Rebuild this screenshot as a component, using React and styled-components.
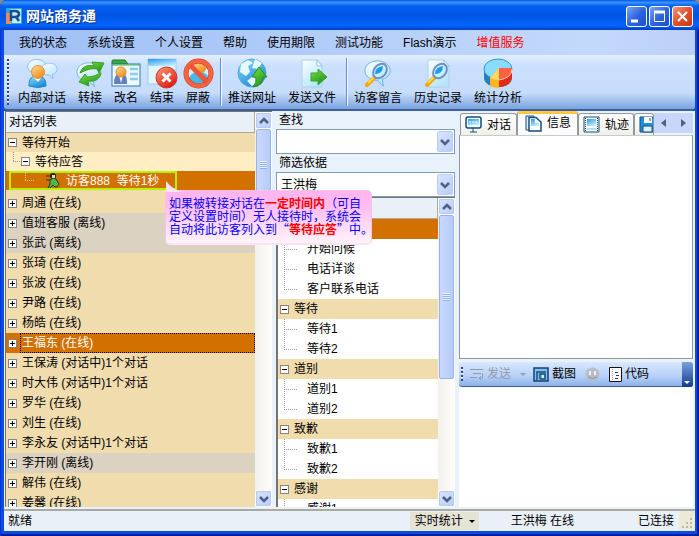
import React from "react";
import styled, { createGlobalStyle, css } from "styled-components";

const MENU = ["我的状态", "系统设置", "个人设置", "帮助", "使用期限", "测试功能", "Flash演示", "增值服务"];

const TOOLS = [
  [
    { label: "内部对话", icon: "chat", width: 60 },
    { label: "转接", icon: "transfer", width: 36 },
    { label: "改名", icon: "rename", width: 36 },
    { label: "结束", icon: "end", width: 36 },
    { label: "屏蔽", icon: "block", width: 36 },
  ],
  [
    { label: "推送网址", icon: "globe", width: 60 },
    { label: "发送文件", icon: "file", width: 60 },
  ],
  [
    { label: "访客留言", icon: "message", width: 60 },
    { label: "历史记录", icon: "history", width: 60 },
    { label: "统计分析", icon: "stats", width: 60 },
  ],
];

const STAFF = [
  { name: "周通", state: "(在线)" },
  { name: "值班客服", state: "(离线)", tone: "offline" },
  { name: "张武", state: "(离线)", tone: "offline" },
  { name: "张琦", state: "(在线)" },
  { name: "张波", state: "(在线)" },
  { name: "尹路", state: "(在线)" },
  { name: "杨皓", state: "(在线)" },
  { name: "王福东", state: "(在线)", tone: "active" },
  { name: "王保涛", state: "(对话中)1个对话" },
  { name: "时大伟", state: "(对话中)1个对话" },
  { name: "罗华", state: "(在线)" },
  { name: "刘生", state: "(在线)" },
  { name: "李永友", state: "(对话中)1个对话" },
  { name: "李开刚", state: "(离线)", tone: "offline" },
  { name: "解伟", state: "(在线)" },
  { name: "姜馨", state: "(在线)" },
];

const PHRASES = [
  { title: "等待", items: ["等待1", "等待2"] },
  { title: "道别", items: ["道别1", "道别2"] },
  { title: "致歉", items: ["致歉1", "致歉2"] },
  { title: "感谢", items: ["感谢1"] },
];

const Bubble = ({ x = 0, y = 0, s = 1 }) => (
  <path
    transform={`translate(${x} ${y}) scale(${s})`}
    d="M14 2C6.500 2 1 6.500 1 12c0 6 6 10 13 10l6 6-1-7c5-1.500 8-5 8-9C27 6.500 21.500 2 14 2Z"
    fill="url(#bubble)"
    stroke="#6fb0dd"
  />
);

const Magnifier = () => (
  <g>
    <path d="M11 20 4 27" stroke="#f5a800" strokeWidth="4" strokeLinecap="round" />
    <path d="M11 19 5 25" stroke="#ffe25a" strokeWidth="1.5" />
    <ellipse cx="17" cy="13" rx="6" ry="8" fill="#c9efff" stroke="#6f92c0" strokeWidth="2" transform="rotate(40 17 13)" />
    <path d="M12 16q0-7 8-8 0 8-8 8" fill="#1e9ce9" />
  </g>
);

const Page = ({ w = 21 }) => (
  <g>
    <path d={`M5 2h${w - 6}l5 6v21H5Z`} fill="url(#bubble)" stroke="#a9d2ec" />
    <path d={`M${w - 1} 2v6h5Z`} fill="#fff" stroke="#8fc4e4" />
  </g>
);

const ICONS = {
  chat: (
    <>
      <Bubble x={0} y={0} s={0.7} />
      <Bubble x={14} y={4} s={0.6} />
      <path d="M2 28c0-8 3-10 8-10s9 2 9 10q-8 3-17 0Z" fill="url(#blue)" stroke="#1c83cd" />
      <path d="m6 19 5 5 4-5-5-2Z" fill="#e8f8ff" />
      <circle cx="11" cy="14" r="6.500" fill="url(#orange)" stroke="#e29332" />
    </>
  ),
  transfer: (
    <>
      <Bubble x={1} y={3} s={0.92} />
      <path d="M5 15C7 9 12 6 19 8l-2-4 12 1-5 10-2-4c-6-1-11 1-17 4Z" fill="url(#green)" stroke="#3f9c2b" />
      <path d="M26 15c-1 6-6 9-13 8l1 5-10-4 6-8 2 3c6 0 9-2 14-4Z" fill="url(#green)" stroke="#3f9c2b" />
    </>
  ),
  rename: (
    <>
      <path d="M1 6V3q0-1 1-1h12l3 4Z" fill="#3aab34" stroke="#237f2c" />
      <rect x="1" y="6" width="28" height="22" fill="#eef9ff" stroke="#2d79bb" />
      <path d="M1 7h28" stroke="#45b53e" />
      <path d="M3 26c0-8 2-10 7-10s6 2 6 10Z" fill="#657fbd" />
      <path d="m8 17 2 8 2-8Z" fill="#fff" />
      <circle cx="10" cy="14" r="5" fill="url(#orange)" stroke="#df8c26" />
      <path d="M19 11h8M19 16h8M19 21h8" stroke="#8ccbeb" strokeWidth="2.500" />
    </>
  ),
  end: (
    <>
      <rect x="1" y="1" width="28" height="25" fill="#e1f5ff" stroke="#9ccbe9" />
      <path d="M1 1h28v7H1Z" fill="url(#tab)" />
      <circle cx="19.500" cy="19.500" r="10.500" fill="url(#red)" stroke="#cf3526" />
      <path d="m15.500 15.500 8 8m0-8-8 8" stroke="#fff" strokeWidth="3" />
    </>
  ),
  block: (
    <>
      <circle cx="15.500" cy="15.500" r="12" fill="#d9ecfb" />
      <path d="M6 23q0-9 10-9t10 9-10 5-10-5" fill="#45b7eb" />
      <circle cx="17" cy="9" r="6.500" fill="url(#orange)" />
      <circle cx="15.500" cy="15.500" r="12.500" fill="none" stroke="#c93a22" strokeWidth="5" />
      <circle cx="15.500" cy="15.500" r="12.500" fill="none" stroke="#f5633f" strokeWidth="4" />
      <path d="m7 7 17 17" stroke="#f15435" strokeWidth="5" />
    </>
  ),
  globe: (
    <>
      <circle cx="15" cy="15" r="14" fill="url(#blue)" stroke="#58abd7" />
      <path d="m4 6 7-4 5 3-5 3 2 6-4 4-6-4ZM18 1l7 4-4 6-6-1ZM10 23l6-5 6 6-7 4Z" fill="#e5f9ff" />
      <path d="m22 9 8 10h-4q0 9-10 10 4-4 3-10h-4Z" fill="url(#green)" stroke="#23931f" />
    </>
  ),
  file: (
    <>
      <Page />
      <path d="M14 15h7v-4l9 8-9 8v-4h-7Z" fill="url(#green)" stroke="#3d9f34" />
    </>
  ),
  message: <><Bubble x={1} y={1} s={0.97} /><Magnifier /></>,
  history: <><Page w={22} /><Magnifier /></>,
  stats: (
    <>
      <path d="M1 11v9c0 5 6 9 14 9s14-4 14-9v-9Z" fill="#247fc2" />
      <ellipse cx="15" cy="11" rx="14" ry="10" fill="#8bdbff" stroke="#2a9ada" />
      <path d="m16 10-9 10v8q4 2 9 2Z" fill="#ffb51c" />
      <path d="m16 10-9 10q4 2 9 2Z" fill="#ffd960" />
      <path d="M16 10h13v10q-2 9-13 9Z" fill="#dd2d19" />
      <path d="M16 10h13q0 9-13 12Z" fill="#ff6240" />
      <path d="M16 22q13-2 13-11" fill="none" stroke="#ffd0bd" />
    </>
  ),
};

const Defs = () => (
  <HiddenSvg aria-hidden="true">
    <defs>
      {[
        ["bubble", "#ffffff", "#b4e5fc"],
        ["blue", "#96ddfc", "#168bd5"],
        ["orange", "#ffdf9d", "#f08d19"],
        ["green", "#7be340", "#21951d"],
        ["red", "#ff9b75", "#df1e16"],
        ["tab", "#2c99e4", "#bcecff"],
      ].map(([id, a, b]) => (
        <linearGradient key={id} id={id} x1="0" y1="0" x2="0.6" y2="1">
          <stop stopColor={a} />
          <stop offset="1" stopColor={b} />
        </linearGradient>
      ))}
    </defs>
  </HiddenSvg>
);

const Chevron = ({ up, left, right }) => (
  <svg width="10" height="8" viewBox="0 0 10 8" aria-hidden="true">
    <path
      d={left ? "M7 0v8L2 4Z" : right ? "M3 0v8l5-4Z" : up ? "m1 6 4-4 4 4" : "m1 2 4 4 4-4"}
      fill={left || right ? "#4d6185" : "none"}
      stroke={left || right ? "none" : "#4d6185"}
      strokeWidth="2.500"
    />
  </svg>
);

const Expander = ({ open }) => (
  <Toggle aria-label={open ? "折叠" : "展开"}>
    <svg width="7" height="7" viewBox="0 0 7 7" shapeRendering="crispEdges" aria-hidden="true">
      <path d={open ? "M1 3h5v1H1Z" : "M1 3h5v1H1ZM3 1h1v5H3Z"} />
    </svg>
  </Toggle>
);

const TabIcon = ({ kind }) => (
  <svg width="17" height="17" viewBox="0 0 17 17" fill="none" stroke="#174b79" aria-hidden="true">
    {kind === "chat" && (
      <>
        <rect x="1" y="1" width="15" height="11" rx="2" fill="#eefaff" strokeWidth="1.500" />
        <path d="M3 3h11v6H3Z" fill="url(#tab)" stroke="none" />
        <path d="M4 6h2m1 0h2m1 0h2" stroke="#fff" />
        <path d="M8 12v4M5 16h7" />
      </>
    )}
    {kind === "info" && (
      <>
        <path d="M1 1h8v14H1Z" fill="#d8f3ff" />
        <path d="M4 2.500h7l5 4.500v9H4Z" fill="#fff" strokeWidth="1.500" />
        <path d="M6 4h4v4h4v3H6Z" fill="url(#tab)" stroke="none" />
      </>
    )}
    {kind === "track" && (
      <>
        <path d="M1 1h15v15H1Z" fill="#fff" />
        <path d="M4 3h9v7H4Z" fill="url(#tab)" stroke="none" />
        <path d="M4 13h9" stroke="#65bff0" />
        <path d="M2.500 2v13M14.500 2v13" strokeDasharray="1 1" />
      </>
    )}
    {kind === "save" && (
      <>
        <path d="M1 1h15v15H1Z" fill="#1c91df" />
        <path d="M5 1h8v6H5Z" fill="#fff" stroke="none" />
        <path d="M11 2v3" />
        <path d="M4 10h9v6H4Z" fill="#d9f4ff" />
      </>
    )}
  </svg>
);

const Combo = ({ id, label, value }) => (
  <>
    <FieldLabel htmlFor={id}>{label}</FieldLabel>
    <ComboBox>
      <Select id={id} defaultValue={value}>
        <option value={value}>{value}</option>
      </Select>
      <ComboArrow><Chevron /></ComboArrow>
    </ComboBox>
  </>
);

const Scroll = ({ share }) => (
  <ScrollTrack>
    <ScrollButton aria-label="向上滚动"><Chevron up /></ScrollButton>
    <Thumb $share={share}><Grip /></Thumb>
    <ScrollSpace />
    <ScrollButton aria-label="向下滚动"><Chevron /></ScrollButton>
  </ScrollTrack>
);

export default function App() {
  return (
    <>
      <GlobalStyle />
      <Defs />
      <Window>
        <TitleBar>
          <Logo viewBox="0 0 16 16" aria-hidden="true">
            <path d="M0 0h16v16H0Z" fill="#26a9e8" />
            <path d="M0 5h5v11H0Z" fill="#f18b51" />
            <path d="M4 1h11v14H6Z" fill="#c5edff" />
            <path d="M5 13V3h4q4 0 4 3t-4 3H6m4 0 3 4" fill="none" stroke="#174d91" strokeWidth="2.500" />
          </Logo>
          <Title>网站商务通</Title>
          <WinButton aria-label="最小化"><svg width="19" height="19"><path d="M4 14h7" stroke="#fff" strokeWidth="3" /></svg></WinButton>
          <WinButton aria-label="最大化"><svg width="19" height="19"><path d="M4.500 5.500h10v9h-10Z" fill="none" stroke="#fff" /><path d="M4 5h11" stroke="#fff" strokeWidth="3" /></svg></WinButton>
          <WinButton aria-label="关闭" $close><svg width="19" height="19"><path d="m5 5 9 9m0-9-9 9" stroke="#fff" strokeWidth="2.200" /></svg></WinButton>
        </TitleBar>
        <Menu>
          {MENU.map((item) => (
            <MenuItem key={item} $hot={item === "增值服务"}>{item}</MenuItem>
          ))}
        </Menu>
        <Toolbar>
          <Handle $size={46} />
          {TOOLS.map((group, idx) => (
            <ToolGroup key={idx}>
              {group.map(({ label, icon, width }) => (
                <Tool key={label} $width={width}>
                  <svg width="31" height="31" viewBox="0 0 31 31" aria-hidden="true">{ICONS[icon]}</svg>
                  {label}
                </Tool>
              ))}
            </ToolGroup>
          ))}
        </Toolbar>
        <Main>
          <DialogPanel>
            <TreeArea>
              <TreeHeader>对话列表</TreeHeader>
              <Tree>
                <Row $short><Expander open />等待开始</Row>
                <Row $short $level={1} $tone="waiting"><Elbow /><Expander open />等待应答</Row>
                <VisitorRow>
                  <Visitor>
                    <Elbow $light />
                    <svg width="14" height="15" viewBox="0 0 14 15" aria-hidden="true">
                      <path d="M0 3h5M0 7h4" stroke="#333" />
                      <circle cx="7" cy="3" r="3" fill="#222" />
                      <path d="m4 7 3-2 3 1 3 5-2 3H9l-2-2-3 3H2l2-4Z" fill="#4fb848" stroke="#183f19" />
                      <path d="M6 2h3v3H6Z" fill="#d4ded2" />
                    </svg>
                    <span>访客888&nbsp; 等待1秒</span>
                  </Visitor>
                </VisitorRow>
                {STAFF.map(({ name, state, tone }) => (
                  <Row key={name} $tone={tone}>
                    <Expander />
                    <RowText $focus={tone === "active"}>{name} {state}</RowText>
                  </Row>
                ))}
              </Tree>
            </TreeArea>
            <Scroll share={18} />
            <Callout>
              <Tail viewBox="0 0 16 11" aria-hidden="true"><path d="M0 0v11h16Q6 8 0 0Z" fill="#ffe3f4" /></Tail>
              如果被转接对话在<b>一定时间内</b>（可自<br />
              定义设置时间）无人接待时，系统会<br />
              自动将此访客列入到<WideQuote>“</WideQuote><b>等待应答</b><WideQuote>”</WideQuote>中。
            </Callout>
          </DialogPanel>
          <PhrasePanel>
            <Combo id="search" label="查找" value="" />
            <Combo id="filter" label="筛选依据" value="王洪梅" />
            <PhraseBox>
              <TreeArea>
                <TreeHeader />
                <Tree $plain>
                  <Row $tone="active" />
                  {["开始问候", "电话详谈", "客户联系电话"].map((item, i) => (
                    <Child key={item} $last={i === 2}>{item}</Child>
                  ))}
                  {PHRASES.map(({ title, items }) => (
                    <React.Fragment key={title}>
                      <Row><Expander open />{title}</Row>
                      {items.map((item, i) => <Child key={item} $last={i === 1}>{item}</Child>)}
                    </React.Fragment>
                  ))}
                </Tree>
              </TreeArea>
              <Scroll share={53} />
            </PhraseBox>
          </PhrasePanel>
          <InfoPanel>
            <Tabs>
              <Tab $width={57}><TabIcon kind="chat" />对话</Tab>
              <Tab $width={61} $active><TabIcon kind="info" />信息</Tab>
              <Tab $width={56}><TabIcon kind="track" />轨迹</Tab>
              <Tab $width={20} aria-label="保存"><TabIcon kind="save" /></Tab>
              <TabNav>
                <button aria-label="上一页"><Chevron left /></button>
                <button aria-label="下一页"><Chevron right /></button>
              </TabNav>
            </Tabs>
            <InfoView />
            <EditBar>
              <Handle $size={14} />
              <EditButton disabled>
                <svg width="14" height="14" fill="none" stroke="#8f9cad"><path d="M0 2.500h13M3 6.500h8M0 10.500h7M12.500 6v5H9m2-2-2 2 2 2" /></svg>
                发送<Caret $muted />
              </EditButton>
              <EditButton>
                <svg width="16" height="15"><path d="M1 1h14v13H1Z" fill="#79c2e8" stroke="#153f78" strokeWidth="1.500" /><path d="M4 13V5h9M7 12V7h5v5H7" fill="none" stroke="#1a4c83" strokeWidth="1.500" /><path d="M9 8h2v3H9Z" fill="#d8f0c8" /></svg>
                截图
              </EditButton>
              <EditButton aria-label="表情" disabled $roomy>
                <svg width="15" height="15"><circle cx="7.500" cy="7.500" r="7" fill="#b8bec8" /><path d="M5 4v4M10 4v4" stroke="#eef2f8" strokeWidth="2" /><path d="M3 10q4 3 9 0" fill="none" stroke="#8492a5" /></svg>
              </EditButton>
              <EditButton>
                <svg width="13" height="15"><path d="M.5.5h12v14H.5Z" fill="#fff" stroke="#111" /><path d="M3.500 2v11" stroke="#9c9caf" strokeDasharray="1 1" /><path d="M6 5.500h3M7 8.500h3M6 11.500h3" stroke="#263a79" /></svg>
                代码
              </EditButton>
              <Overflow aria-label="更多"><Caret $white /></Overflow>
            </EditBar>
            <Editor aria-label="消息内容" />
          </InfoPanel>
        </Main>
        <StatusBar>
          <span>就绪</span>
          <StatusButton>实时统计<Caret /></StatusButton>
          <StatusUser>王洪梅 在线</StatusUser>
          <span>已连接</span>
          <SizeGrip>
            <svg width="12" height="12" aria-hidden="true"><path d="M9 1h2v2H9ZM5 5h2v2H5Zm4 0h2v2H9ZM1 9h2v2H1Zm4 0h2v2H5Zm4 0h2v2H9Z" fill="#b9b8a7" /></svg>
          </SizeGrip>
        </StatusBar>
      </Window>
    </>
  );
}

const GlobalStyle = createGlobalStyle`
  * { box-sizing: border-box; }
  body {
    margin: 0;
    background: #8e8e84;
  }
  body, button, select, textarea {
    font-family: "Liberation Sans", "Noto Sans CJK SC", sans-serif;
    font-size: 12px;
    line-height: 16px;
    color: #000;
  }
  button {
    border: 0;
    padding: 0;
    background: none;
    white-space: nowrap;
  }
  svg { display: block; flex: none; }
`;

const HiddenSvg = styled.svg`
  position: absolute;
  width: 0;
  height: 0;
`;

const Window = styled.div`
  height: 100vh;
  display: flex;
  flex-direction: column;
  padding: 0 4px 5px;
  border-radius: 7px 7px 0 0;
  overflow: hidden;
  background: #0b4be0;
  box-shadow: inset 1px 0 #0831d9, inset -2px -2px #001ea0;
`;

const TitleBar = styled.header`
  height: 30px;
  flex: none;
  display: flex;
  align-items: center;
  gap: 2px;
  margin: 0 -4px;
  padding: 2px 6px 0;
  background: linear-gradient(#0058e6 0%, #3a93ff 8%, #0560ee 20%, #0054e3 50%, #0464fb 85%, #0040c8 100%);
`;

const Logo = styled.svg`
  width: 16px;
  height: 16px;
`;

const Title = styled.h1`
  flex: 1;
  margin: 0 0 0 2px;
  font-size: 14px;
  line-height: 20px;
  color: #fff;
  text-shadow: 1px 1px #0a2f85;
`;

const WinButton = styled.button`
  width: 21px;
  height: 21px;
  border: 1px solid #fff;
  border-radius: 3px;
  background: ${({ $close }) =>
    $close ? "linear-gradient(135deg, #f09a7e, #e2502b 50%, #c43a12)" : "linear-gradient(135deg, #7ba3f5, #2f65df 50%, #1d4fd0)"};
`;

const Menu = styled.nav`
  height: 25px;
  flex: none;
  display: flex;
  align-items: center;
  gap: 20px;
  padding-left: 15px;
  background: linear-gradient(90deg, #9ebef5, #c3d9fb 85%, #bccff7);
`;

const MenuItem = styled.button`
  color: ${({ $hot }) => ($hot ? "#f00" : "#000")};
`;

const Toolbar = styled.div`
  height: 56px;
  flex: none;
  display: flex;
  align-items: center;
  padding-left: 3px;
  background: linear-gradient(#e3effe, #cbe0fd 20%, #c6dcfb 70%, #7ba3df);
  border-bottom: 2px solid #3b619c;
  border-radius: 0 0 4px 4px;
`;

const Handle = styled.span`
  width: 2px;
  height: ${({ $size }) => $size}px;
  flex: none;
  background: repeating-linear-gradient(#27418a 0 2px, #fff 2px 3px, transparent 3px 4px);
`;

const ToolGroup = styled.div`
  display: flex;
  padding: 0 4px 0 3px;

  & + & {
    border-left: 1px solid #6a8ccb;
    box-shadow: inset 1px 0 #f1f9ff;
    padding-left: 1px;
  }
`;

const Tool = styled.button`
  width: ${({ $width }) => $width}px;
  height: 48px;
  display: flex;
  flex-direction: column;
  align-items: center;
  justify-content: space-between;
`;

const Main = styled.main`
  flex: 1;
  min-height: 0;
  display: grid;
  grid-template-columns: 267px 179px minmax(0, 1fr);
  column-gap: 4px;
  padding: 0 2px 2px 1px;
  background: #e9f1fb;
`;

const DialogPanel = styled.section`
  position: relative;
  min-height: 0;
  display: flex;
  border-top: 1px solid #77746b;
  border-left: 1px solid #77746b;
`;

const TreeArea = styled.div`
  flex: 1;
  min-width: 0;
  min-height: 0;
  display: flex;
  flex-direction: column;
`;

const TreeHeader = styled.div`
  height: 21px;
  flex: none;
  padding: 2px 3px 0;
  background: #e9f0f8;
  border-bottom: 1px solid #aaa99c;
  border-right: 1px solid #aaa99c;
`;

const Tree = styled.div`
  flex: 1;
  min-height: 0;
  overflow: hidden;
  background: ${({ $plain }) => ($plain ? "#fff" : "#f1dcae")};
`;

const TONES = {
  offline: css`background: #dbd2c1;`,
  waiting: css`background: #ffedc3;`,
  active: css`background: #d27000; color: #fff;`,
};

const Row = styled.div`
  height: ${({ $short }) => ($short ? 19 : 20)}px;
  display: flex;
  align-items: center;
  gap: 5px;
  padding-left: ${({ $level }) => ($level ? 7 : 2)}px;
  white-space: nowrap;
  background: #f1dcae;
  ${({ $tone }) => TONES[$tone]}
`;

const RowText = styled.span`
  flex: 1;
  line-height: 18px;
  border: 1px dotted ${({ $focus }) => ($focus ? "#000" : "transparent")};
  margin-left: -2px;
  padding-left: 1px;
`;

const Toggle = styled.button`
  width: 9px;
  height: 9px;
  flex: none;
  border: 1px solid #848484;
  background: #fff;
`;

const Elbow = styled.span`
  --dots: ${({ $light }) => ($light ? "#e5c79a" : "#9c968a")};
  width: 10px;
  height: 100%;
  flex: none;
  margin-right: -7px;
  background:
    repeating-linear-gradient(var(--dots) 0 1px, transparent 1px 2px) left top / 1px 50% no-repeat,
    repeating-linear-gradient(90deg, var(--dots) 0 1px, transparent 1px 2px) left center / 100% 1px no-repeat;
`;

const VisitorRow = styled.div`
  height: 22px;
  padding-left: 3px;
  background: linear-gradient(#d27000 19px, #f1dcae 19px);
`;

const Visitor = styled.div`
  width: 168px;
  height: 19px;
  display: flex;
  align-items: center;
  gap: 6px;
  padding-left: 14px;
  border: 2px solid #b8f000;
  color: #fff;

  svg { margin-left: 12px; }
`;

const ScrollTrack = styled.div`
  width: 17px;
  flex: none;
  display: flex;
  flex-direction: column;
  background: linear-gradient(90deg, #f3f1ec, #fefefb);
`;

const arrowBox = css`
  display: flex;
  align-items: center;
  justify-content: center;
  border: 1px solid #fff;
  border-radius: 2px;
  background: linear-gradient(135deg, #d9e5ff, #b9cdfa);
`;

const ScrollButton = styled.button`
  height: 17px;
  flex: none;
  ${arrowBox}
  box-shadow: inset 0 0 0 1px #b6caf5;
`;

const Thumb = styled.div`
  height: ${({ $share }) => $share}%;
  margin: 0 1px;
  display: flex;
  align-items: center;
  justify-content: center;
  border: 1px solid #98b4e7;
  border-radius: 2px;
  background: linear-gradient(90deg, #c9d8ff, #b7ccfb);
`;

const Grip = styled.span`
  width: 7px;
  height: 8px;
  background: repeating-linear-gradient(#eef4fe 0 1px, #8cb0f8 1px 2px);
`;

const ScrollSpace = styled.div`
  flex: 1;
`;

const Callout = styled.aside`
  position: absolute;
  z-index: 2;
  left: 159px;
  top: 78px;
  width: 207px;
  padding: 7px 3px 6px;
  border: 1px solid #f5c5e5;
  border-bottom: 2px solid #fbe3f3;
  border-radius: 5px;
  background: linear-gradient(#ffb4ef, #ffbdf0 30%, #fff3fc);
  line-height: 13px;
  color: #00f;
  white-space: nowrap;

  b { color: #f00; }
`;

const WideQuote = styled.span`
  font-family: "Noto Sans CJK SC", sans-serif;
  line-height: 1px;
`;

const Tail = styled.svg`
  position: absolute;
  left: 0;
  top: -10px;
  width: 16px;
  height: 11px;
`;

const PhrasePanel = styled.section`
  min-height: 0;
  display: flex;
  flex-direction: column;
`;

const FieldLabel = styled.label`
  height: 18px;
  flex: none;
  padding: 1px 3px 0;
`;

const ComboBox = styled.div`
  height: 25px;
  flex: none;
  display: grid;
  border: 1px solid #7f9db9;
  background: #fff;

  & > * { grid-area: 1 / 1; }
`;

const Select = styled.select`
  appearance: none;
  width: 100%;
  border: 0;
  padding: 0 20px 0 4px;
  background: transparent;
`;

const ComboArrow = styled.span`
  width: 16px;
  justify-self: end;
  margin: 1px;
  ${arrowBox}
  border-color: #bccdf5;
  pointer-events: none;
`;

const PhraseBox = styled.div`
  flex: 1;
  min-height: 0;
  display: flex;
  border-top: 1px solid #77746b;
  border-left: 2px solid #77746b;
`;

const Child = styled.div`
  height: 20px;
  padding: 2px 0 0 29px;
  background:
    repeating-linear-gradient(#a19d90 0 1px, transparent 1px 2px) 6px 0 / 1px ${({ $last }) => ($last ? "10px" : "100%")} no-repeat,
    repeating-linear-gradient(90deg, #a19d90 0 1px, transparent 1px 2px) 6px 10px / 13px 1px no-repeat,
    #fff;
`;

const InfoPanel = styled.section`
  min-height: 0;
  display: flex;
  flex-direction: column;
`;

const Tabs = styled.div`
  height: 24px;
  flex: none;
  display: flex;
  align-items: flex-end;
  padding-left: 1px;
`;

const Tab = styled.button`
  width: ${({ $width }) => $width}px;
  height: ${({ $active }) => ($active ? 24 : 22)}px;
  display: flex;
  align-items: center;
  gap: 5px;
  padding-left: 4px;
  overflow: hidden;
  border: 1px solid #919b9c;
  border-bottom: 0;
  border-radius: 3px 3px 0 0;
  background: linear-gradient(#fff, #f0f0ea);
  ${({ $active }) => $active && css`
    padding: 0 0 3px 7px;
    border-top: 3px solid #ffc73c;
    background: #fcfcfe;
  `}
`;

const TabNav = styled.div`
  flex: 1;
  height: 20px;
  align-self: center;
  display: flex;
  background: #c8d6fb;

  button {
    flex: 1;
    display: flex;
    align-items: center;
    justify-content: center;
  }
`;

const InfoView = styled.div`
  flex: 2;
  min-height: 0;
  border: 1px solid #919b9c;
  border-top: 0;
  background: #fff;
  box-shadow: inset 0 1px #c5cacb;
`;

const EditBar = styled.div`
  height: 25px;
  flex: none;
  display: flex;
  align-items: center;
  gap: 7px;
  margin-top: 3px;
  padding-left: 2px;
  border-bottom: 1px solid #3b619c;
  border-radius: 3px;
  background: linear-gradient(#d9e8fd, #b6d0f7 60%, #8db1ea);
`;

const EditButton = styled.button`
  display: flex;
  align-items: center;
  gap: 3px;
  padding: 0 ${({ $roomy }) => ($roomy ? 2 : 0)}px;
  color: ${({ disabled }) => (disabled ? "#919ba9" : "#000")};
`;

const Caret = styled.span`
  margin-left: 6px;
  border: 3px solid transparent;
  border-bottom: 0;
  border-top-color: ${({ $muted, $white }) => ($white ? "#fff" : $muted ? "#929bac" : "#000")};
`;

const Overflow = styled.button`
  width: 11px;
  height: 25px;
  margin-left: auto;
  display: flex;
  align-items: flex-end;
  padding: 0 0 3px 2px;
  border-radius: 0 3px 3px 0;
  background: linear-gradient(#78a1e0, #123b8d);

  span { margin: 0; }
`;

const Editor = styled.textarea`
  flex: 1;
  min-height: 0;
  resize: none;
  border: 0;
  padding: 4px;
  background: #fff;
`;

const StatusBar = styled.footer`
  height: 22px;
  flex: none;
  display: flex;
  align-items: center;
  padding: 0 1px 0 4px;
  border-top: 2px solid #aaa9a2;
  background: #e9f0f8;
`;

const StatusButton = styled.button`
  display: flex;
  align-items: center;
  margin-left: auto;
  height: 18px;
  padding: 0 4px 0 5px;
  background: #e5e3d5;
`;

const StatusUser = styled.span`
  margin: 0 64px 0 32px;
`;

const SizeGrip = styled.span`
  align-self: stretch;
  display: flex;
  align-items: flex-end;
  margin-left: 5px;
  padding: 0 1px 2px 2px;
  background: #ece9d8;
`;
